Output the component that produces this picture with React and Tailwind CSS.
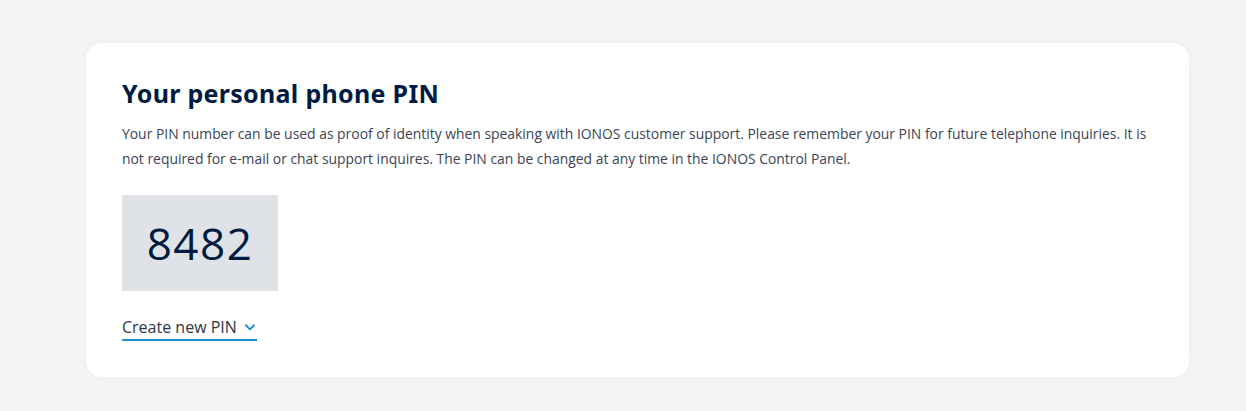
export default function App() {
  return (
    <div className="min-h-[411px] w-full bg-[#f4f5f7] pt-[43px] pl-[86px] pr-[57px]" style={{ fontFamily: '"Open Sans", sans-serif' }}>
      <div className="w-[1103px] h-[334px] rounded-[16px] bg-white shadow-[0_0_12px_rgba(0,0,0,0.04)] px-[36px] pt-[33px]">
        <h1 className="text-[25px] leading-[34px] font-bold text-[#001b41] tracking-[0.3px]" style={{ fontFamily: '"Noto Sans", sans-serif' }}>
          Your personal phone PIN
        </h1>
        <p className="mt-[11px] text-[13.9px] leading-[25px] text-[#3b4454]">
          Your PIN number can be used as proof of identity when speaking with IONOS customer support. Please remember your PIN for future telephone inquiries. It is not required for e-mail or chat support inquires. The PIN can be changed at any time in the IONOS Control Panel.
        </p>
        <div className="mt-[24px] w-[156px] h-[96px] bg-[#dfe2e7] flex items-center justify-center">
          <span className="text-[44px] leading-none text-[#001b41] tracking-[1.5px]">8482</span>
        </div>
        <button type="button" className="mt-[26px] flex items-center gap-[6px] border-b-2 border-[#1b8fd6] pb-[2px] text-[16px] leading-[20px] text-[#2c3646]">
          Create new PIN
          <svg width="14" height="14" viewBox="0 0 24 24" fill="none" stroke="#1b8fd6" strokeWidth="3.2" strokeLinecap="round" strokeLinejoin="round">
            <path d="M5 9l7 7 7-7" />
          </svg>
        </button>
      </div>
    </div>
  );
}
